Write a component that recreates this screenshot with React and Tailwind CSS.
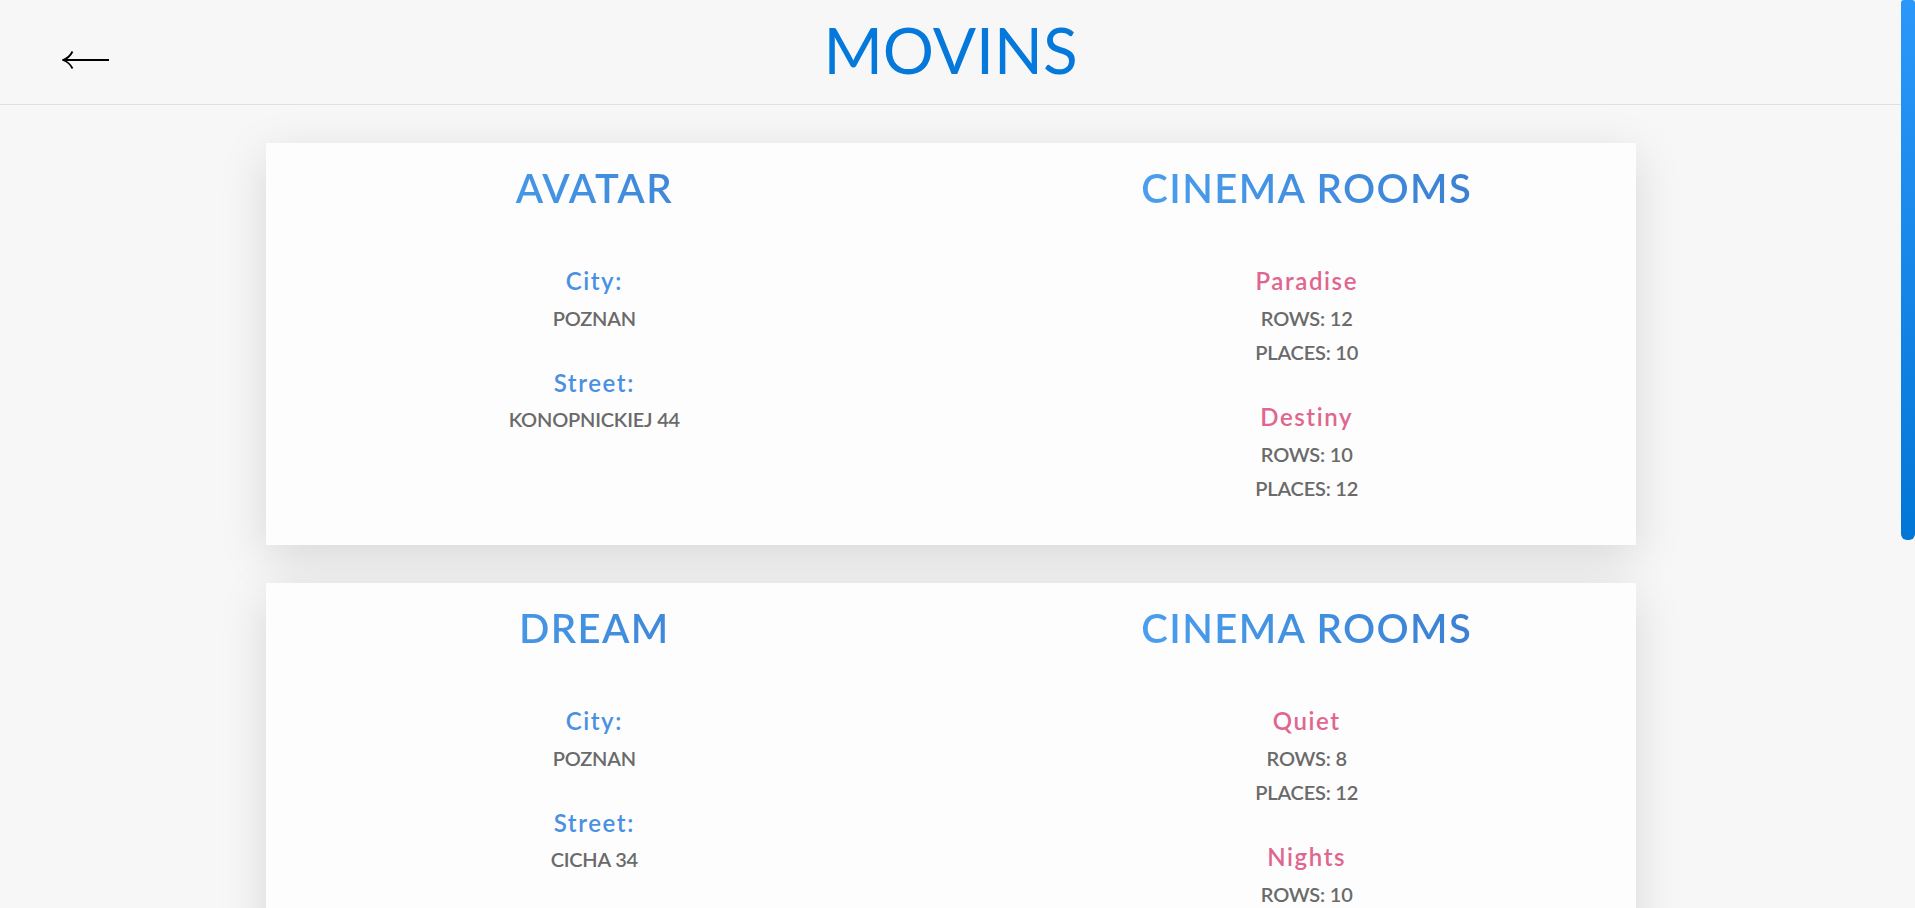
import React from "react";

const cinemas = [
  {
    name: "AVATAR",
    city: "POZNAN",
    street: "KONOPNICKIEJ 44",
    rooms: [
      { name: "Paradise", rows: 12, places: 10 },
      { name: "Destiny", rows: 10, places: 12 },
    ],
  },
  {
    name: "DREAM",
    city: "POZNAN",
    street: "CICHA 34",
    rooms: [
      { name: "Quiet", rows: 8, places: 12 },
      { name: "Nights", rows: 10, places: 10 },
    ],
  },
];

function Heading({ children }) {
  return (
    <h2 className="block w-full text-[40px] leading-[48px] font-semibold tracking-[1.4px] bg-[linear-gradient(90deg,#52aefa,#3370c6)] bg-clip-text text-transparent">
      {children}
    </h2>
  );
}

function Label({ children, pink }) {
  return (
    <div
      className={
        "text-[24px] leading-[32px] font-semibold tracking-[1.6px] " +
        (pink ? "text-[#e0668f]" : "text-[#4a90e2]")
      }
    >
      {children}
    </div>
  );
}

function Value({ children, className = "" }) {
  return (
    <div className={"text-[20px] leading-[28px] font-semibold text-[#6a6a6a] tracking-[-0.2px] " + className}>
      {children}
    </div>
  );
}

function Card({ c }) {
  return (
    <div className="mx-auto w-[1370px] shrink-0 bg-[#fdfdfd] shadow-[0_12px_45px_rgba(0,0,0,0.13)] pt-[21px] pb-[43px] flex justify-between">
      <div className="w-[48%] text-center">
        <Heading>{c.name}</Heading>
        <div className="mt-[53px]">
          <Label>City:</Label>
          <Value className="mt-[7px]">{c.city}</Value>
        </div>
        <div className="mt-[35px]">
          <Label>Street:</Label>
          <Value className="mt-[6px]">{c.street}</Value>
        </div>
      </div>
      <div className="w-[48%] text-center">
        <Heading>CINEMA ROOMS</Heading>
        <div className="mt-[53px] flex flex-col gap-[35px]">
          {c.rooms.map((r) => (
            <div key={r.name}>
              <Label pink>{r.name}</Label>
              <Value className="mt-[7px]">ROWS: {r.rows}</Value>
              <Value className="mt-[6px]">PLACES: {r.places}</Value>
            </div>
          ))}
        </div>
      </div>
    </div>
  );
}

export default function App() {
  return (
    <div
      className="h-screen w-full flex overflow-hidden bg-[#f7f7f7]"
      style={{ fontFamily: "Lato, 'Open Sans', sans-serif" }}
    >
      <div className="flex-1 min-w-0 flex flex-col">
        <header className="h-[105px] shrink-0 border-b border-[#e0e0e0] grid grid-cols-[1fr_auto_1fr]">
          <div className="pl-[62px] pt-[51px]">
            <svg width="47" height="18" viewBox="0 0 47 18" fill="none">
              <path d="M47 9H2" stroke="#000" strokeWidth="2" />
              <path d="M10.5 0.5C8.5 4.5 5 7.6 1 9C5 10.4 8.5 13.5 10.5 17.5" stroke="#000" strokeWidth="1.8" fill="none" />
            </svg>
          </div>
          <h1 className="pt-[11px] text-[64px] leading-[77px] font-normal text-[#0479db]">MOVINS</h1>
          <div />
        </header>
        <main className="pt-[38px] flex flex-col gap-[38px]">
          {cinemas.map((c) => (
            <Card key={c.name} c={c} />
          ))}
        </main>
      </div>
      <div className="w-[14px] shrink-0">
        <div className="h-[540px] rounded-t-[3px] rounded-b-[6px] bg-[linear-gradient(180deg,#2b97fb,#0276d6)]" />
      </div>
    </div>
  );
}
